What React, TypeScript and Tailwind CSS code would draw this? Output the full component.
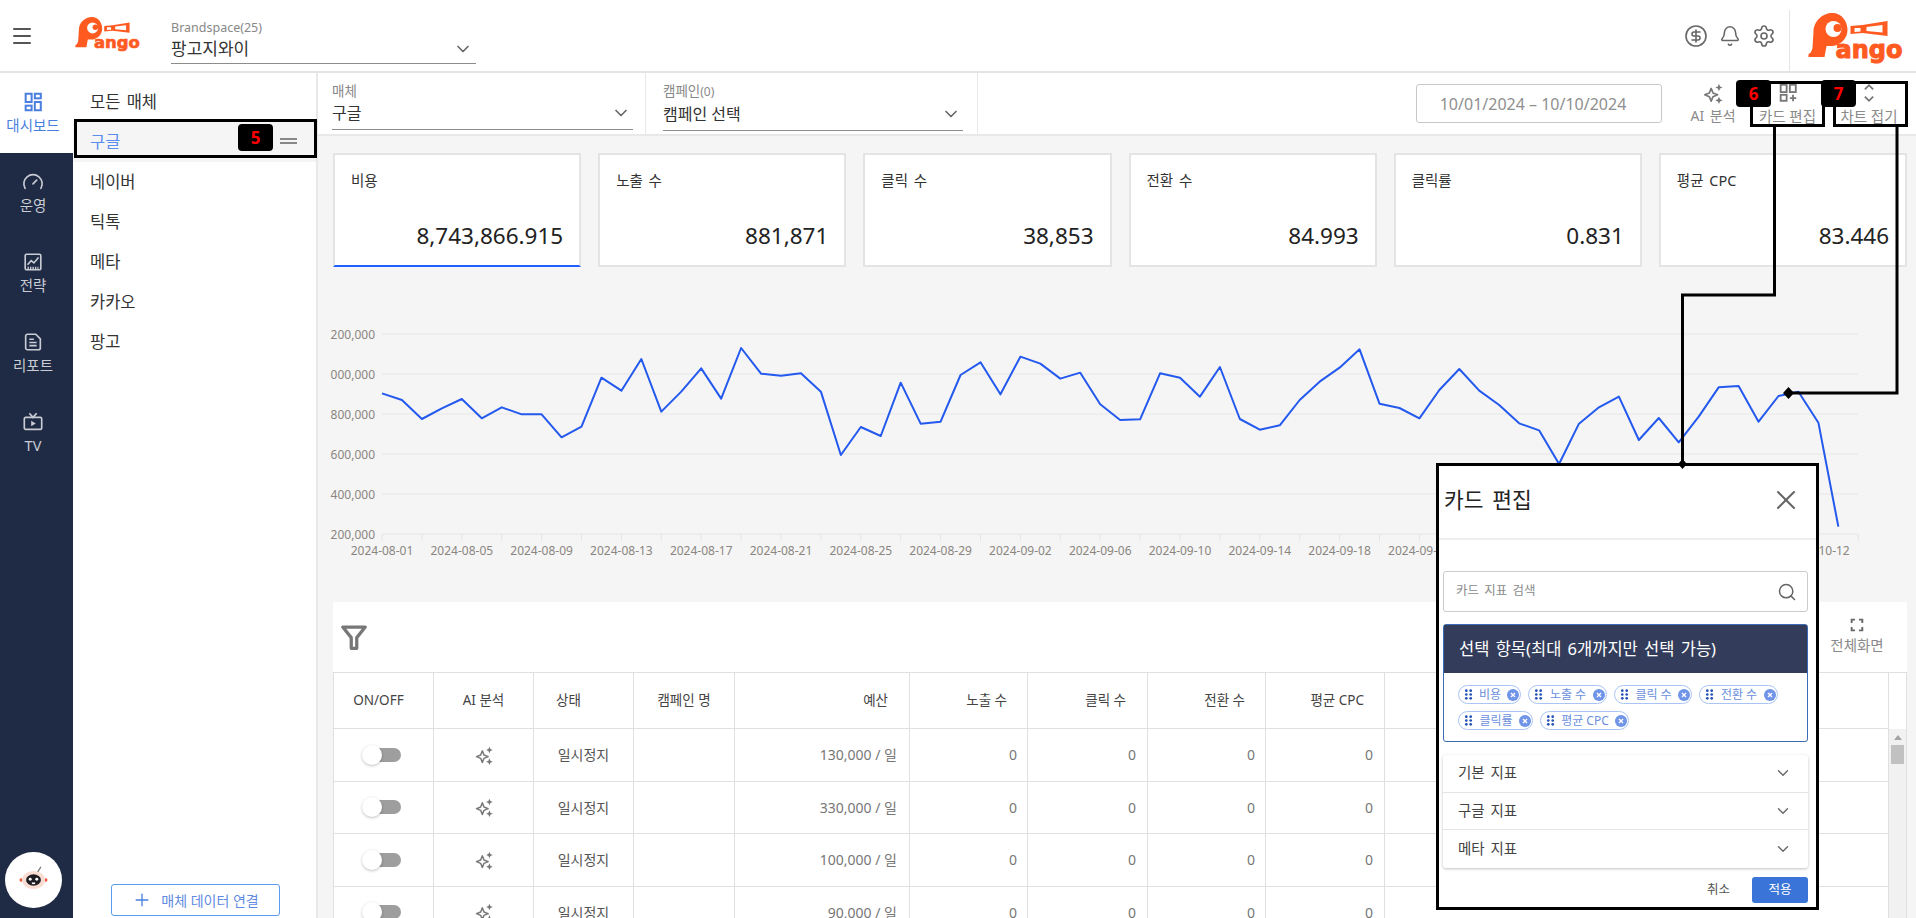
import React from 'react';
import { Bell, ChevronDown, CircleDollarSign, Gauge, Menu, Plus, Search, Settings, X } from 'lucide-react';

const Logo = ({ className }: { className: string }) => (
  <svg viewBox="8 9 95 54" className={className}>
    <path fill="#ff5a1f" d="M32 9C41 9 47 17 47 26C47 35 39 42 31 42L26 42L24 53L8 53L8 50Q11 49 12 44L13 28C13 17 22 9 32 9Z" />
    <circle cx="33" cy="25" r="8" fill="#fff" />
    <circle cx="37" cy="24" r="4" fill="#ff5a1f" />
    <path fill="#ff5a1f" fillRule="evenodd" d="M50 22L62 21L87 17L87 32L62 29L50 30ZM54 24V28L60 27.5V24ZM66 23V27L82 28.5V21Z" />
    <text x="35" y="54" fill="#ff5a1f" stroke="#ff5a1f" strokeWidth="1" fontFamily="'DejaVu Sans',sans-serif" fontWeight="700" fontSize="24" textLength="67" lengthAdjust="spacingAndGlyphs">ango</text>
  </svg>
);

const Sparkle = ({ className }: { className: string }) => (
  <svg viewBox="0 0 24 24" className={className} fill="none">
    <path d="M10 7L12 12L17 14L12 16L10 21L8 16L3 14L8 12Z" stroke="currentColor" strokeWidth="1.8" strokeLinejoin="round" />
    <path d="M18.5 2L19.7 4.8L22.5 6L19.7 7.2L18.5 10L17.3 7.2L14.5 6L17.3 4.8Z" fill="currentColor" />
    <path d="M18.5 16L19.7 18.8L22.5 20L19.7 21.2L18.5 24L17.3 21.2L14.5 20L17.3 18.8Z" fill="currentColor" />
  </svg>
);

const DashboardIcon = () => (
  <svg viewBox="0 0 24 24" className="h-[22px] w-[22px]" fill="none" stroke="currentColor" strokeWidth="2.2">
    <rect x="4" y="3" width="6.5" height="9" />
    <rect x="14" y="3" width="6.5" height="5" />
    <rect x="14" y="12" width="6.5" height="9" />
    <rect x="4" y="16" width="6.5" height="5" />
  </svg>
);

const ChartBoxIcon = () => (
  <svg viewBox="0 0 24 24" className="h-[22px] w-[22px]" fill="none" stroke="currentColor" strokeWidth="1.8">
    <rect x="3.5" y="3.5" width="17" height="17" rx="1.5" />
    <path d="M6 15L10 10.5L13 13L18 7" />
    <path d="M6 18.5H18" strokeDasharray="1.5 1.2" strokeWidth="2.5" />
  </svg>
);

const ReportIcon = () => (
  <svg viewBox="0 0 24 24" className="h-[22px] w-[22px]" fill="none" stroke="currentColor" strokeWidth="1.8">
    <path d="M4 5.5C4 4.4 4.9 3.5 6 3.5H15L20 8.5V18.5C20 19.6 19.1 20.5 18 20.5H6C4.9 20.5 4 19.6 4 18.5Z" />
    <path d="M8 9H13M8 12.5H16M8 16H16" />
  </svg>
);

const TvIcon = () => (
  <svg viewBox="0 0 24 24" className="h-[22px] w-[22px]" fill="none" stroke="currentColor" strokeWidth="1.8">
    <rect x="2.5" y="7" width="19" height="13" rx="1.5" />
    <path d="M8 2.5L12 7L16 2.5" />
    <path d="M10 10.5L15 13.5L10 16.5Z" fill="currentColor" stroke="none" />
  </svg>
);

const navItems = [
  { label: '운영', icon: <Gauge size={22} strokeWidth={1.8} /> },
  { label: '전략', icon: <ChartBoxIcon /> },
  { label: '리포트', icon: <ReportIcon /> },
  { label: 'TV', icon: <TvIcon /> },
];

const mediaItems = ['네이버', '틱톡', '메타', '카카오', '팡고'];

const cards = [
  { title: '비용', value: '8,743,866.915', active: true },
  { title: '노출 수', value: '881,871' },
  { title: '클릭 수', value: '38,853' },
  { title: '전환 수', value: '84.993' },
  { title: '클릭률', value: '0.831' },
  { title: '평균 CPC', value: '83.446' },
];

// y positions read off the chart, page coordinates
const lineY = [
  280, 300, 357, 325, 297, 355, 322, 343, 343, 412, 380, 233, 272, 177, 335, 275, 205, 296, 144, 221, 227, 220, 275, 465, 381, 408, 248, 371, 365, 225, 187, 283, 170, 191, 236, 218, 313, 360,
  358, 220, 233, 290, 201, 357, 389, 376, 300, 245, 203, 148, 311, 324, 355, 270, 207, 272, 315, 370, 391, 492, 371, 322, 290, 420, 354, 427, 350, 262, 258, 365, 288, 275, 368, 680,
];
const linePoints = lineY.map((v, i) => `${382 + i * 19.95},${300 + v / 3}`).join(' ');

const gridY = [
  { y: 334, label: '200,000' },
  { y: 374, label: '000,000' },
  { y: 414, label: '800,000' },
  { y: 454, label: '600,000' },
  { y: 494, label: '400,000' },
  { y: 534, label: '200,000' },
];

const xLabels = [
  '2024-08-01', '2024-08-05', '2024-08-09', '2024-08-13', '2024-08-17', '2024-08-21', '2024-08-25', '2024-08-29', '2024-09-02', '2024-09-06',
  '2024-09-10', '2024-09-14', '2024-09-18', '2024-09-22', '2024-09-26', '2024-09-30', '2024-10-04', '2024-10-08', '2024-10-12',
];

const rows = ['130,000 / 일', '330,000 / 일', '100,000 / 일', '90,000 / 일'];

const chips = [
  [
    { label: '비용', w: 'w-[63px]' },
    { label: '노출 수', w: 'w-[79px]' },
    { label: '클릭 수', w: 'w-[78px]' },
    { label: '전환 수', w: 'w-[79px]' },
  ],
  [
    { label: '클릭률', w: 'w-[75px]' },
    { label: '평균 CPC', w: 'w-[89px]' },
  ],
];

const Chart = () => (
  <svg viewBox="318 267 1598 335" className="h-[335px] w-full shrink-0">
    {gridY.map((g) => (
      <g key={g.y}>
        <line x1="382" x2="1858" y1={g.y} y2={g.y} stroke="#ebebeb" strokeWidth="1.5" />
        <text x="375" y={g.y + 5} textAnchor="end" fontSize="12" fill="#8a8580">{g.label}</text>
      </g>
    ))}
    {Array.from({ length: 38 }).map((_, i) => (
      <line key={i} x1={382 + i * 39.9} x2={382 + i * 39.9} y1="534" y2="541" stroke="#e6e6e6" />
    ))}
    {xLabels.map((d, i) => (
      <text key={d} x={382 + i * 79.8} y="555" textAnchor="middle" fontSize="12" fill="#8a8580">{d}</text>
    ))}
    <polyline points={linePoints} fill="none" stroke="#2459ee" strokeWidth="2" strokeLinejoin="round" />
  </svg>
);

const Card = ({ title, value, active }: { title: string; value: string; active?: boolean }) => (
  <div className={`flex h-[114px] flex-1 flex-col justify-between border-2 border-[#e4e4e4] bg-white pb-[12px] pl-[16px] pr-[16px] pt-[13px] ${active ? 'border-b-[#1f5eff]' : ''}`}>
    <div className="text-[14.5px] leading-[24px] text-[#333] [word-spacing:2px]">{title}</div>
    <div className="text-right text-[22.5px] leading-[34px] text-[#222]">{value}</div>
  </div>
);

const SelectField = ({ label, value, className }: { label: React.ReactNode; value: string; className: string }) => (
  <div className={`flex flex-col ${className}`}>
    <div className="text-[13.5px] leading-[18px] text-[#888]">{label}</div>
    <div className="flex h-[30px] items-center justify-between border-b border-[#8c8c8c] pb-[3px] text-[16px] text-[#333]">
      <span>{value}</span>
      <ChevronDown size={20} className="mr-[2px] text-[#666]" />
    </div>
  </div>
);

export default function App() {
  return (
    <div className="relative flex h-[918px] w-[1916px] flex-col overflow-hidden bg-white [font-family:'Noto_Sans','Noto_Sans_CJK_KR',sans-serif]">
      {/* top bar */}
      <header className="flex h-[73px] shrink-0 items-center border-b-2 border-[#e4e4e4] pl-[10px]">
        <Menu size={24} strokeWidth={2} className="text-[#555]" />
        <Logo className="ml-[41px] h-[37px] w-[66px]" />
        <div className="ml-[30px] flex w-[305px] flex-col pt-[11px]">
          <div className="text-[12.5px] leading-[18px] text-[#888]">Brandspace(25)</div>
          <div className="flex h-[27px] items-center justify-between border-b border-[#8c8c8c] pb-[2px] text-[17px] text-[#333]">
            <span>팡고지와이</span>
            <ChevronDown size={20} className="mr-[3px] text-[#666]" />
          </div>
        </div>
        <div className="ml-auto flex h-full items-center">
          <CircleDollarSign size={24} strokeWidth={1.6} className="text-[#666]" />
          <Bell size={22} strokeWidth={1.7} className="ml-[11px] text-[#666]" />
          <Settings size={24} strokeWidth={1.6} className="ml-[11px] text-[#666]" />
          <div className="ml-[13px] mt-[10px] flex h-[61px] w-[127px] items-start border-l border-[#e4e4e4] pl-[17px] pt-[3px]">
            <Logo className="h-[54px] w-[98px]" />
          </div>
        </div>
      </header>

      <div className="flex min-h-0 flex-1">
        {/* main nav */}
        <nav className="flex w-[73px] shrink-0 flex-col bg-[#1f2a44] text-[#c9ccd4]">
          <div className="flex h-[80px] flex-col items-center justify-center gap-[2px] bg-white pr-[7px] text-[#4a7fe0]">
            <DashboardIcon />
            <span className="text-[14.5px] leading-[20px]">대시보드</span>
          </div>
          {navItems.map((n) => (
            <div key={n.label} className="flex h-[80px] flex-col items-center justify-center gap-[2px] pr-[7px]">
              {n.icon}
              <span className="text-[14.5px] leading-[20px]">{n.label}</span>
            </div>
          ))}
          <div className="mb-[10px] ml-[5px] mt-auto flex h-[56px] w-[57px] items-center justify-center rounded-full bg-white">
            <svg viewBox="0 0 40 34" className="h-[28px] w-[33px]">
              <line x1="24" y1="9" x2="29" y2="1" stroke="#777" strokeWidth="1.5" />
              <circle cx="5" cy="17" r="2" fill="#ef5a3c" />
              <circle cx="35" cy="17" r="2" fill="#ef5a3c" />
              <ellipse cx="20" cy="17" rx="14" ry="11" fill="#f9dcd2" />
              <ellipse cx="20" cy="17" rx="9" ry="7" fill="#1c1c22" />
              <circle cx="16" cy="16" r="1.8" fill="#fff" />
              <circle cx="24" cy="16" r="1.8" fill="#fff" />
              <path d="M18 20H22V22H18Z" fill="#fff" />
            </svg>
          </div>
        </nav>

        {/* media list */}
        <aside className="flex w-[245px] shrink-0 flex-col border-r-2 border-[#e8e8e8] pt-[9px] text-[16.5px] text-[#333] [word-spacing:2px]">
          <div className="flex h-[40px] items-center pl-[17px]">모든 매체</div>
          <div className="flex h-[40px] items-center bg-[#f5f5f5] pl-[17px] text-[#5b8def]">구글</div>
          {mediaItems.map((m) => (
            <div key={m} className="flex h-[40px] items-center pl-[17px]">{m}</div>
          ))}
          <button className="mb-[2px] ml-[38px] mt-auto flex h-[32px] w-[169px] items-center justify-center gap-[9px] rounded-[3px] border border-[#5b9bf0] text-[14px] text-[#5f8be0]">
            <Plus size={20} strokeWidth={1.6} className="text-[#4a7fe0]" />
            <span>매체 데이터 연결</span>
          </button>
        </aside>

        <main className="flex min-w-0 flex-1 flex-col bg-[#f5f5f5]">
          {/* filters */}
          <div className="flex h-[63px] shrink-0 items-center border-b-2 border-[#e8e8e8] bg-white">
            <div className="flex h-full w-[328px] items-start border-r border-[#e8e8e8] pl-[14px] pt-[9px]">
              <SelectField label="매체" value="구글" className="w-[301px]" />
            </div>
            <div className="flex h-full w-[332px] items-start border-r border-[#e8e8e8] pl-[17px] pt-[9px]">
              <SelectField
                label={<>캠페인<span className="text-[12px]">(0)</span></>}
                value="캠페인 선택"
                className="w-[300px]"
              />
            </div>
            <div className="ml-[438px] flex h-[39px] w-[246px] items-center justify-center rounded-[3px] border border-[#c8c8c8] pr-[12px] text-[16px] text-[#8f8f8f]">
              10/01/2024 – 10/10/2024
            </div>
            <div className="ml-[14px] flex w-[74px] flex-col items-center text-[#8a8a8a]">
              <Sparkle className="h-[22px] w-[22px] text-[#777]" />
              <span className="mt-[2px] text-[14px] leading-[20px] [word-spacing:2px]">AI 분석</span>
            </div>
            <div className="flex w-[75px] flex-col items-center text-[#8a8a8a]">
              <svg viewBox="0 0 24 24" className="h-[22px] w-[22px] text-[#777]" fill="none" stroke="currentColor" strokeWidth="2">
                <rect x="4" y="3" width="6.5" height="8" />
                <rect x="14" y="3" width="6.5" height="8" />
                <rect x="4" y="14" width="6.5" height="6.5" />
                <path d="M17.5 14V21M14 17.5H21" />
              </svg>
              <span className="mt-[2px] text-[14.5px] leading-[20px]">카드 편집</span>
            </div>
            <div className="ml-[8px] flex w-[72px] flex-col items-center text-[#8a8a8a]">
              <svg viewBox="0 0 24 24" className="h-[22px] w-[22px] text-[#777]" fill="none" stroke="currentColor" strokeWidth="2">
                <path d="M7.5 8L12 3.5L16.5 8M7.5 16L12 20.5L16.5 16" />
              </svg>
              <span className="mt-[2px] text-[14.5px] leading-[20px]">차트 접기</span>
            </div>
          </div>

          {/* kpi cards */}
          <div className="flex shrink-0 gap-[17px] pl-[15px] pr-[9px] pt-[17px]">
            {cards.map((c) => (
              <Card key={c.title} {...c} />
            ))}
          </div>

          <Chart />

          {/* table panel */}
          <div className="ml-[15px] mr-[9px] flex min-h-0 flex-1 flex-col rounded-t-[3px] bg-white">
            <div className="flex h-[70px] shrink-0 items-center justify-between pl-[6px] pr-[14px]">
              <svg viewBox="0 0 24 24" className="h-[30px] w-[30px] text-[#777]" fill="none" stroke="currentColor" strokeWidth="2.6" strokeLinejoin="round">
                <path d="M3 4H21L14.2 12.5V21H9.8V12.5Z" />
              </svg>
              <div className="mr-[1px] flex w-[70px] flex-col items-center text-[#8a8a8a]">
                <svg viewBox="0 0 24 24" className="h-[16px] w-[16px] text-[#666]" fill="none" stroke="currentColor" strokeWidth="2.8">
                  <path d="M4 9V4H9M15 4H20V9M20 15V20H15M9 20H4V15" />
                </svg>
                <span className="text-[14.5px] leading-[24px]">전체화면</span>
              </div>
            </div>
            <div className="flex min-h-0 flex-1">
              <table className="h-fit w-[1556px] shrink-0 table-fixed border-collapse border-l border-[#e0e0e0] text-[13.5px]">
                <colgroup>
                  <col className="w-[100px]" />
                  <col className="w-[100px]" />
                  <col className="w-[100px]" />
                  <col className="w-[101px]" />
                  <col className="w-[175px]" />
                  <col className="w-[118px]" />
                  <col className="w-[120px]" />
                  <col className="w-[118px]" />
                  <col className="w-[119px]" />
                  <col />
                </colgroup>
                <thead>
                  <tr className="h-[56px] text-[#444] [&>th]:border [&>th]:border-[#e0e0e0] [&>th]:font-normal">
                    <th className="pr-[10px] text-center">ON/OFF</th>
                    <th className="text-center">AI 분석</th>
                    <th className="pl-[22px] text-left">상태</th>
                    <th className="text-center">캠페인 명</th>
                    <th className="pr-[21px] text-right">예산</th>
                    <th className="pr-[20px] text-right">노출 수</th>
                    <th className="pr-[21px] text-right">클릭 수</th>
                    <th className="pr-[20px] text-right">전환 수</th>
                    <th className="pr-[20px] text-right">평균 CPC</th>
                    <th />
                  </tr>
                </thead>
                <tbody>
                  {rows.map((budget) => (
                    <tr key={budget} className="h-[52.5px] text-[14px] text-[#777] [&>td]:border [&>td]:border-[#e0e0e0]">
                      <td>
                        <div className="relative ml-[29px] h-[14px] w-[38px] rounded-full bg-[#9e9e9e]">
                          <div className="absolute left-[-1px] top-[-3px] h-[20px] w-[20px] rounded-full bg-white shadow-[0_1px_3px_rgba(0,0,0,0.25)]" />
                        </div>
                      </td>
                      <td>
                        <Sparkle className="mx-auto h-[20px] w-[20px] text-[#777]" />
                      </td>
                      <td className="text-center text-[#555]">일시정지</td>
                      <td />
                      <td className="pr-[12px] text-right">{budget}</td>
                      <td className="pr-[10px] text-right">0</td>
                      <td className="pr-[11px] text-right">0</td>
                      <td className="pr-[10px] text-right">0</td>
                      <td className="pr-[11px] text-right">0</td>
                      <td />
                    </tr>
                  ))}
                </tbody>
              </table>
              <div className="flex flex-1 flex-col border-r border-[#e0e0e0]">
                <div className="h-[57px] shrink-0 border-t border-[#e0e0e0]" />
                <div className="flex flex-1 flex-col items-center bg-[#f1f1f1] pt-[6px]">
                  <div className="h-0 w-0 border-x-[4px] border-b-[5px] border-x-transparent border-b-[#a3a3a3]" />
                  <div className="mt-[5px] h-[19px] w-[13px] bg-[#c1c1c1]" />
                </div>
              </div>
            </div>
          </div>
        </main>
      </div>

      {/* card edit dialog */}
      <div className="absolute left-[1436px] top-[463px] flex h-[447px] w-[383px] flex-col border-[3px] border-black bg-white text-[#333]">
        <div className="flex h-[74px] shrink-0 items-center justify-between border-b-2 border-[#eee] pb-[4px] pl-[5px] pr-[14px]">
          <span className="text-[21.5px] text-[#222] [word-spacing:3px]">카드 편집</span>
          <X size={32} strokeWidth={1.5} className="text-[#666]" />
        </div>
        <div className="mx-[4px] mr-[8px] flex flex-1 flex-col">
          <div className="mt-[31px] flex h-[41px] shrink-0 items-center justify-between rounded-[3px] border border-[#ccc] pl-[12px] pr-[10px] text-[12.5px] text-[#8a8a8a] [word-spacing:2px]">
            <span>카드 지표 검색</span>
            <Search size={20} strokeWidth={1.8} className="text-[#666]" />
          </div>
          <div className="mt-[12px] shrink-0 rounded-[3px] border border-[#3a6bb5]">
            <div className="flex h-[48px] items-center bg-[#333d5b] pl-[15px] text-[16.5px] text-white [word-spacing:2px]">
              선택 항목(최대 6개까지만 선택 가능)
            </div>
            <div className="flex h-[68px] flex-col gap-[7px] pl-[14px] pt-[12px]">
              {chips.map((row, r) => (
                <div key={r} className="flex gap-[7px]">
                  {row.map((c) => (
                    <div key={c.label} className={`flex h-[19px] items-center justify-between rounded-full border border-[#a9c4f5] pl-[5px] pr-[1px] text-[12px] text-[#6b8fdc] ${c.w}`}>
                      <svg viewBox="0 0 8 10" className="h-[11px] w-[9px]" fill="#1f4fb5">
                        <circle cx="2" cy="1.5" r="1.2" />
                        <circle cx="6" cy="1.5" r="1.2" />
                        <circle cx="2" cy="5" r="1.2" />
                        <circle cx="6" cy="5" r="1.2" />
                        <circle cx="2" cy="8.5" r="1.2" />
                        <circle cx="6" cy="8.5" r="1.2" />
                      </svg>
                      <span className="leading-none">{c.label}</span>
                      <svg viewBox="0 0 12 12" className="h-[12px] w-[12px]">
                        <circle cx="6" cy="6" r="6" fill="#6f94e8" />
                        <path d="M4 4L8 8M8 4L4 8" stroke="#fff" strokeWidth="1.4" />
                      </svg>
                    </div>
                  ))}
                </div>
              ))}
            </div>
          </div>
          <div className="mt-[13px] h-[113px] shrink-0 rounded-[3px] shadow-[0_1px_3px_rgba(0,0,0,0.25)]">
            {['기본 지표', '구글 지표', '메타 지표'].map((t, i) => (
              <div key={t} className={`flex h-[37.67px] items-center justify-between pl-[15px] pr-[16px] text-[14.5px] text-[#444] [word-spacing:2px] ${i < 2 ? 'border-b border-[#e4e4e4]' : ''}`}>
                <span>{t}</span>
                <ChevronDown size={18} strokeWidth={1.8} className="text-[#666]" />
              </div>
            ))}
          </div>
          <div className="mt-[9px] flex shrink-0 items-center justify-end text-[12.5px]">
            <span className="mr-[22px] text-[#555]">취소</span>
            <button className="h-[26px] w-[56px] rounded-[3px] bg-[#3a74d8] text-white">적용</button>
          </div>
        </div>
      </div>

      {/* annotation markers */}
      <div className="absolute left-[74px] top-[119px] h-[39px] w-[243px] border-[3px] border-black" />
      <div className="absolute left-[238px] top-[124px] flex h-[27px] w-[35px] items-center justify-center rounded-[4px] bg-black text-[17px] font-bold text-[#ff0000]">5</div>
      <div className="absolute left-[280px] top-[138px] h-[6px] w-[17px] border-y-2 border-[#888]" />
      <div className="absolute left-[1750px] top-[81px] h-[46px] w-[75px] border-[3px] border-black" />
      <div className="absolute left-[1736px] top-[80px] flex h-[27px] w-[35px] items-center justify-center rounded-[4px] bg-black text-[17px] font-bold text-[#ff0000]">6</div>
      <div className="absolute left-[1833px] top-[81px] h-[46px] w-[75px] border-[3px] border-black" />
      <div className="absolute left-[1821px] top-[80px] flex h-[27px] w-[35px] items-center justify-center rounded-[4px] bg-black text-[17px] font-bold text-[#ff0000]">7</div>
      <svg viewBox="0 0 1916 918" className="pointer-events-none absolute left-0 top-0 h-[918px] w-[1916px]" fill="none">
        <path d="M1774.5 127V295H1682.5V464" stroke="#000" strokeWidth="3" />
        <path d="M1897 127V393H1789" stroke="#000" strokeWidth="3" />
        <path d="M1788.5 387L1794 393L1788.5 399L1783 393Z" fill="#000" />
        <path d="M1682.5 459L1687 464L1682.5 469L1678 464Z" fill="#000" />
      </svg>
    </div>
  );
}
